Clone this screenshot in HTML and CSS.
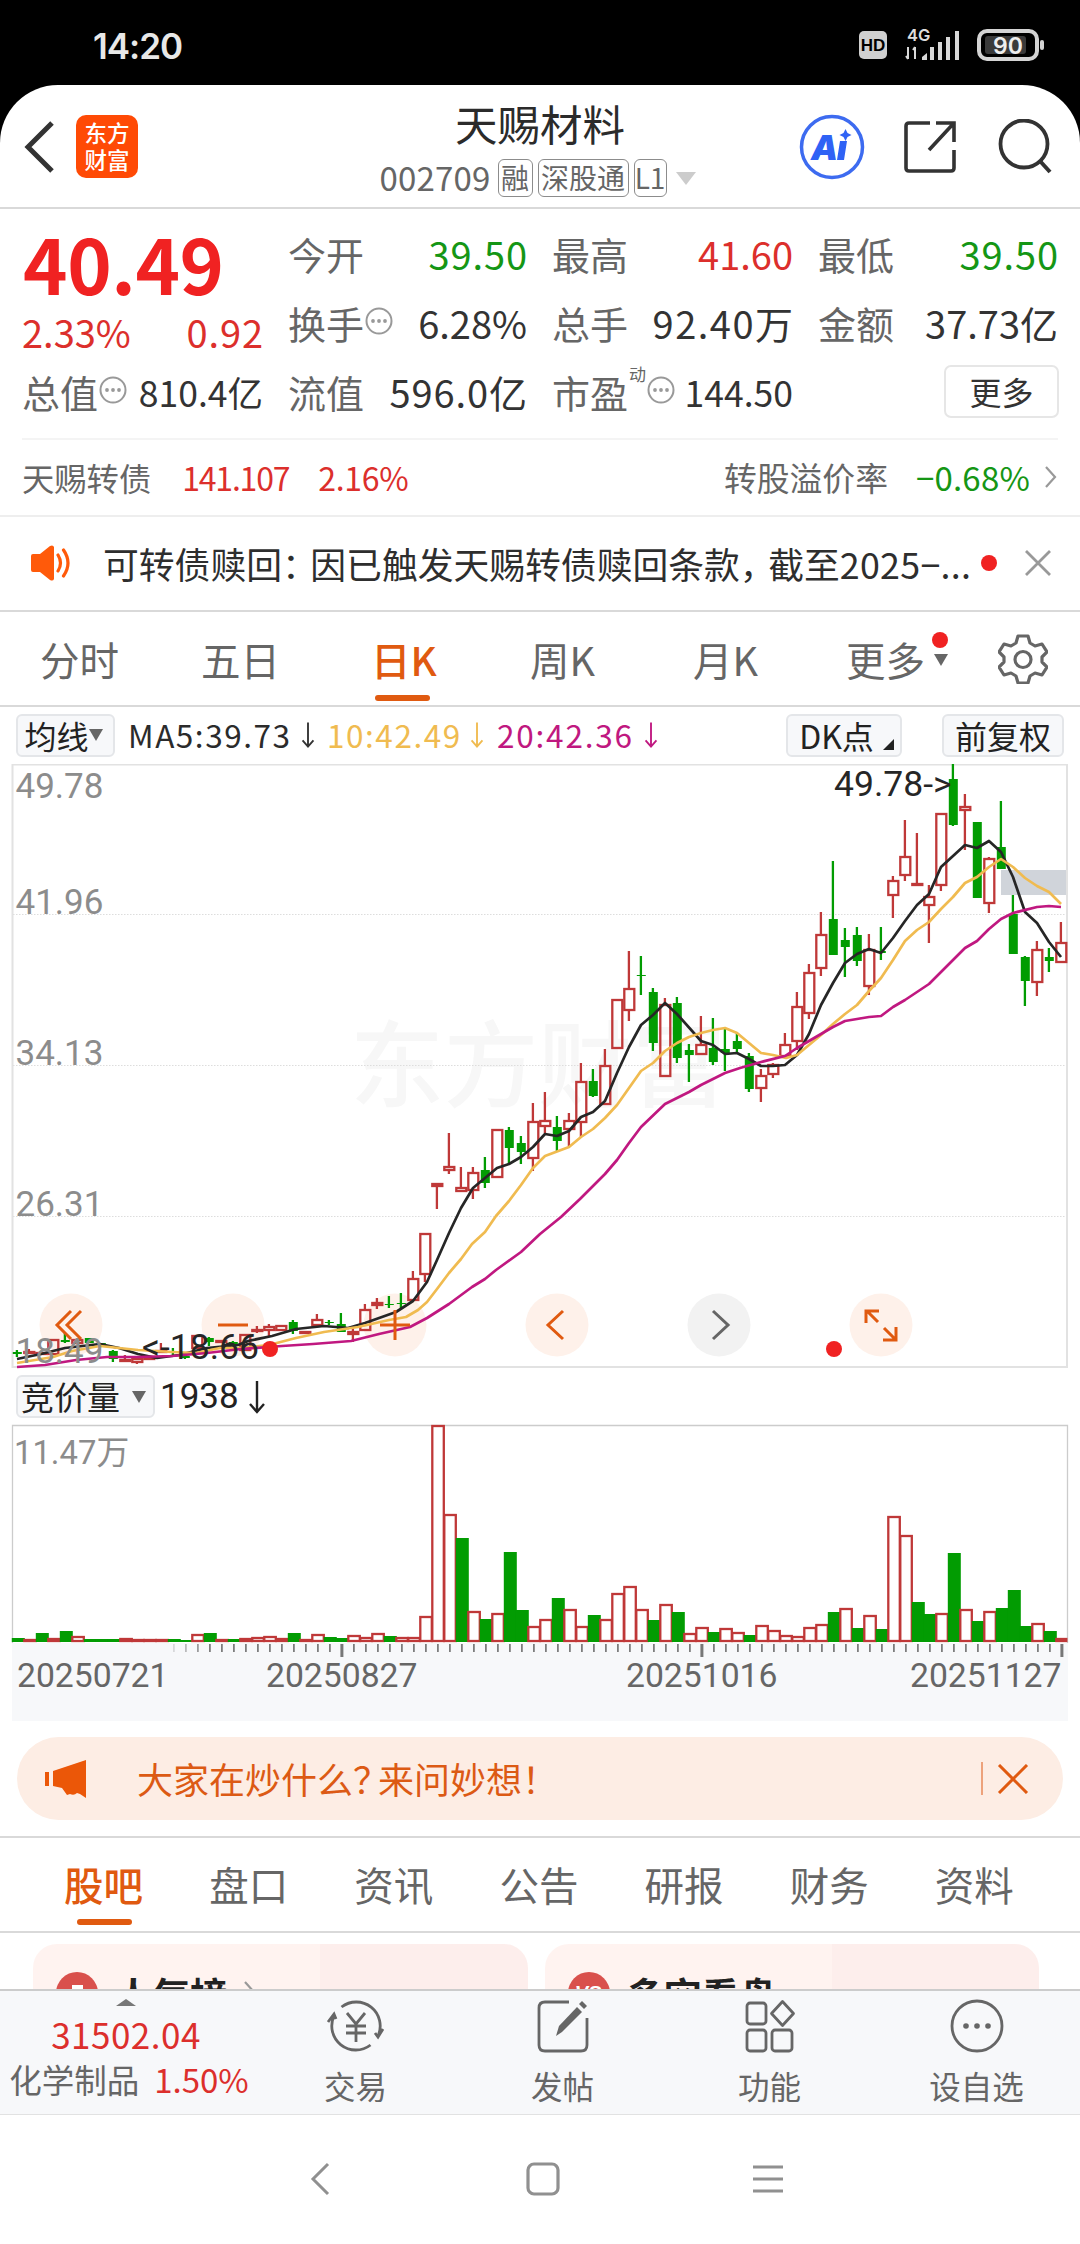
FILE: index.html
```html
<!DOCTYPE html>
<html lang="zh-CN">
<head>
<meta charset="utf-8">
<title>天赐材料 002709</title>
<link rel="stylesheet" href="styles.css">
</head>
<body>
<div class="phone">
  <div class="status">
    <span class="clock">14:20</span>
    <div class="status-icons">
      <span class="hd">HD</span>
      <svg class="signal" width="58" height="36" viewBox="0 0 58 36">
        <text x="2" y="14" class="net">4G</text>
        <path d="M3 20v12M1 29l2 3M10 32V20M8 23l2-3" stroke="#d8d8d8" stroke-width="2" fill="none"/>
        <path d="M17 33v-3l5-4v7zM25 33v-13h4v13zM33 33v-18h4v18zM41 33V10h4v23zM50 33V4h4v29z" fill="#d8d8d8"/>
      </svg>
      <svg width="70" height="32" viewBox="0 0 70 32">
        <rect x="2" y="2" width="58" height="28" rx="8" fill="none" stroke="#d4d4d4" stroke-width="4"/>
        <rect x="8" y="7" width="41" height="18" rx="3" fill="#3a3a3a"/>
        <rect x="63" y="11" width="4" height="10" rx="2" fill="#d4d4d4"/>
        <text x="31" y="24.500" text-anchor="middle" class="batt">90</text>
      </svg>
    </div>
  </div>

  <main class="app">
    <header class="header">
      <div class="head-left">
        <svg width="32" height="54" viewBox="0 0 32 54"><path d="M28 3 4 27l24 24" fill="none" stroke="#333" stroke-width="5"/></svg>
        <div class="logo"><span>东方</span><span>财富</span></div>
      </div>
      <div class="head-title">
        <h1>天赐材料</h1>
        <div class="code"><span class="num">002709</span><i class="t1">融</i><i class="t3">深股通</i><i class="t2">L1</i><b class="tri"></b></div>
      </div>
      <div class="head-right">
        <svg width="66" height="66" viewBox="0 0 66 66"><circle cx="33" cy="33" r="30.500" fill="none" stroke="#3d6bf0" stroke-width="3.500"/><text x="12" y="46" class="ai">A</text><path d="M41 27h7l-3 19h-7zM46.500 15l2 4 4 2-4 2-2 4-2-4-4-2 4-2z" fill="#2f62f5"/></svg>
        <svg width="56" height="56" viewBox="0 0 56 56"><path d="M28 4H7q-3 0-3 3v42q0 3 3 3h42q3 0 3-3V31M34 4h18v19M52 4 27 31" fill="none" stroke="#333" stroke-width="3.600"/></svg>
        <svg width="56" height="56" viewBox="0 0 56 56"><circle cx="26" cy="25" r="23.500" fill="none" stroke="#333" stroke-width="3.800"/><path d="m42 42 10 11" stroke="#333" stroke-width="4"/></svg>
      </div>
    </header>

    <section class="quote">
      <div class="col c1">
        <div class="price">40.49</div>
        <div class="row r2 red"><span>2.33%</span><span class="w1">0.92</span></div>
        <div class="row"><label>总值<svg class="more"><use href="#dots"/></svg></label><span class="sm">810.4亿</span></div>
      </div>
      <div class="col">
        <div class="row"><label>今开</label><span class="green w1">39.50</span></div>
        <div class="row"><label>换手<svg class="more"><use href="#dots"/></svg></label><span>6.28%</span></div>
        <div class="row"><label>流值</label><span class="w1">596.0亿</span></div>
      </div>
      <div class="col">
        <div class="row"><label>最高</label><span class="red">41.60</span></div>
        <div class="row"><label>总手</label><span class="w2">92.40万</span></div>
        <div class="row"><label>市盈<sup>动</sup><svg class="more"><use href="#dots"/></svg></label><span class="sm">144.50</span></div>
      </div>
      <div class="col">
        <div class="row"><label>最低</label><span class="green w1">39.50</span></div>
        <div class="row"><label>金额</label><span>37.73亿</span></div>
        <div class="row end"><button class="btn-more">更多</button></div>
      </div>
    </section>

    <section class="bond">
      <span>天赐转债</span><span class="red b1">141.107</span><span class="red b2">2.16%</span>
      <span class="push">转股溢价率</span><span class="green b3">−0.68%</span>
      <svg width="14" height="24" viewBox="0 0 14 24"><path d="m2 2 9 10-9 10" fill="none" stroke="#999" stroke-width="2.200"/></svg>
    </section>

    <section class="notice">
      <svg width="44" height="36" viewBox="0 0 44 36"><path d="M1 11q0-2 2-2h7L20 1q3-1.500 4 1v32q-1 2.500-4 1l-10-8H3q-2 0-2-2z" fill="#ff5a0a"/><path d="M28 10q5 8 0 16M33.500 5q9 13 0 26" fill="none" stroke="#ff5a0a" stroke-width="3.200" stroke-linecap="round"/></svg>
      <p>可转债赎回<em>：</em>因已触发天赐转债赎回条款<em>，</em>截至<span>2025−...</span></p>
      <b class="dot"></b>
      <svg width="28" height="28" viewBox="0 0 28 28"><path d="m2 2 24 24M26 2 2 26" stroke="#999" stroke-width="2.800"/></svg>
    </section>

    <nav class="periods">
      <span>分时</span><span>五日</span><span class="on">日K</span><span>周K</span><span>月K</span>
      <span class="p-more">更多<b class="dot"></b><b class="tri dark"></b></span>
      <svg width="50" height="50" viewBox="0 0 50 50"><path d="M20 2h10l2 7 5 3 7-2 5 8-5 5v5l5 5-5 8-7-2-5 3-2 7H20l-2-7-5-3-7 2-5-8 5-5v-5l-5-5 5-8 7 2 5-3z" fill="none" stroke="#666" stroke-width="3.200" stroke-linejoin="round"/><circle cx="25" cy="25.500" r="8" fill="none" stroke="#666" stroke-width="3.200"/></svg>
    </nav>

    <section class="ma">
      <button class="chip avg">均线<b class="tri dark"></b></button>
      <span class="m m5">MA5:39.73</span><svg class="arr"><use href="#down"/></svg>
      <span class="m m10">10:42.49</span><svg class="arr m10"><use href="#down"/></svg>
      <span class="m m20">20:42.36</span><svg class="arr m20"><use href="#down"/></svg>
      <button class="chip dk">DK点<b class="corner"></b></button>
      <button class="chip fq">前复权</button>
    </section>

    <section class="kline">
      <svg id="kline" width="1080" height="605" viewBox="0 764 1080 605"></svg>
      <div class="tools">
        <button><svg viewBox="0 0 64 64"><path d="M32 18 18 32l14 14M42 18 28 32l14 14"/></svg></button>
        <button><svg viewBox="0 0 64 64"><path d="M17 32h30"/></svg></button>
        <button><svg viewBox="0 0 64 64"><path d="M17 32h30M32 17v30"/></svg></button>
        <button><svg viewBox="0 0 64 64"><path d="M38 18 23 32l15 14"/></svg></button>
        <button class="off"><svg viewBox="0 0 64 64"><path d="m26 18 15 14-15 14"/></svg></button>
        <button><svg viewBox="0 0 64 64"><path d="M17 30V18h13M18 18l11 11M47 34v13H34M46 46 35 35"/></svg></button>
      </div>
      <b class="dot d1"></b><b class="dot d2"></b>
    </section>

    <section class="auction">
      <button class="chip wide">竞价量<b class="tri dark"></b></button><span>1938</span><svg class="arr"><use href="#down"/></svg>
    </section>
    <svg id="volume" class="volume" width="1080" height="298" viewBox="0 1424 1080 298"></svg>

    <section class="banner">
      <svg width="44" height="38" viewBox="0 0 44 38"><path d="M0 12h4v14H0zM8 11 41 0v38l-6-4-3-1q-3 3-7 1l-3 1-5-7-9-2z" fill="#eb5708"/></svg>
      <p>大家在炒什么<em>？</em>来问妙想！</p>
      <i></i>
      <svg width="32" height="30" viewBox="0 0 32 30"><path d="m2 1 28 28M30 1 2 29" stroke="#e05a10" stroke-width="3"/></svg>
    </section>

    <nav class="tabs"><span class="on">股吧</span><span>盘口</span><span>资讯</span><span>公告</span><span>研报</span><span>财务</span><span>资料</span></nav>

    <section class="cards">
      <div class="card"><svg class="badge" viewBox="0 0 42 42"><circle cx="21" cy="21" r="21"/><path d="M16 13h11v20H16z" fill="#fff"/></svg><strong>人气榜</strong><svg class="chev" width="14" height="24" viewBox="0 0 14 24"><path d="m2 2 9 10-9 10" fill="none" stroke="#999" stroke-width="2.200"/></svg></div>
      <div class="card"><svg class="badge" viewBox="0 0 42 42"><circle cx="21" cy="21" r="21"/><text x="20" y="28" text-anchor="middle">VS</text></svg><strong>多空看盘</strong></div>
    </section>

    <footer class="dock">
      <div class="index"><b class="tri up"></b><span class="val red">31502.04</span><span class="ind">化学制品<em class="red">1.50%</em></span></div>
      <div class="act"><svg viewBox="0 0 60 56"><path d="M15.500 9A24 24 0 0 1 52 38m5-7-5 8-3-4M44.500 47A24 24 0 0 1 8 18m-6 6 6-8 2 5" /><path d="m21 15 9 11 9-11M30 26v18M20 28h20M20 35h20"/></svg>交易</div>
      <div class="act"><svg viewBox="0 0 60 56"><path d="M36 4H12q-6 0-6 6v37q0 6 6 6h36q6 0 6-6V20"/><path d="M23 38 26 28 44 9l5 5-20 20z" fill="#666" stroke="none"/><path d="m46 6 3-3 5 5-3 3z" fill="#666" stroke="none"/></svg>发帖</div>
      <div class="act"><svg viewBox="0 0 60 56"><rect x="7" y="5" width="19" height="21" rx="3"/><rect x="7" y="32" width="19" height="21" rx="3"/><rect x="32" y="32" width="20" height="21" rx="3"/><path d="m42.500 3.500 11 12-11 12-11-12z" stroke-linejoin="round"/></svg>功能</div>
      <div class="act"><svg viewBox="0 0 60 56"><circle cx="30" cy="28" r="25"/><g fill="#666" stroke="none"><circle cx="19" cy="28" r="2.800"/><circle cx="30" cy="28" r="2.800"/><circle cx="41" cy="28" r="2.800"/></g></svg>设自选</div>
    </footer>
  </main>

  <div class="sysnav">
    <svg width="34" height="36" viewBox="0 0 34 36"><path d="M26 3 11 18l15 15" fill="none" stroke="#909090" stroke-width="3"/></svg>
    <svg width="34" height="34" viewBox="0 0 34 34"><rect x="2" y="2" width="30" height="30" rx="6" fill="none" stroke="#909090" stroke-width="3.200"/></svg>
    <svg width="34" height="34" viewBox="0 0 34 34"><path d="M3 5h30M3 17h30M3 29h30" stroke="#909090" stroke-width="3.200"/></svg>
  </div>
</div>

<svg width="0" height="0" class="defs">
  <symbol id="dots" viewBox="0 0 28 28"><circle cx="14" cy="14" r="12.500" fill="none" stroke="#999" stroke-width="2"/><circle cx="8" cy="14" r="1.900" fill="#999"/><circle cx="14" cy="14" r="1.900" fill="#999"/><circle cx="20" cy="14" r="1.900" fill="#999"/></symbol>
  <symbol id="down" viewBox="0 0 18 34"><path d="M9 1v31M2 24l7 8 7-8" fill="none" stroke="currentColor" stroke-width="2.400"/></symbol>
</svg>
<script src="chart.js"></script>
</body>
</html>
```

FILE: styles.css
```css
* { box-sizing: border-box; }
body { margin: 0; background: #000; font-family: "Noto Sans CJK SC", "Noto Sans", sans-serif; color: #333; }
button { font: inherit; color: inherit; padding: 0; margin: 0; }
em, i { font-style: normal; }
.phone { width: 1080px; height: 2244px; overflow: hidden; display: flex; flex-direction: column; background: #000; }
.defs { position: absolute; }
.red { color: #dc2f2c; }
.green { color: #159615; }
.dot { display: block; width: 16px; height: 16px; border-radius: 50%; background: #f02222; }
.tri { display: block; width: 0; height: 0; border: 10px solid transparent; border-top: 13px solid #ccc; border-bottom: 0; }
.tri.dark { border-width: 7px; border-top: 12px solid #666; border-bottom: 0; }
.tri.up { border-top: 0; border-bottom: 7px solid #777; }

.status { height: 85px; flex: none; display: flex; justify-content: space-between; align-items: flex-start; padding: 28px 33px 0 93px; color: #e8e8e8; }
.clock { font: 600 35px/36px Inter, sans-serif; letter-spacing: -1px; }
.status-icons { display: flex; align-items: center; height: 34px; }
.hd { width: 28px; height: 28px; border-radius: 5px; background: #d0d0d0; color: #000; font: 600 17px/29px "Liberation Sans", sans-serif; text-align: center; }
.signal { margin: 0 14px 0 18px; }
.net { font: 600 16.500px Inter, sans-serif; fill: #ddd; }
.batt { font: 600 23px Inter, sans-serif; fill: #eee; }

.app { height: 2030px; flex: none; background: #fff; border-radius: 58px 58px 0 0; overflow: hidden; display: flex; flex-direction: column; }
.app > * { flex: none; }

.header { height: 124px; border-bottom: 2px solid #d9d9d9; display: grid; grid-template-columns: 1fr 400px 1fr; }
.head-left { display: flex; align-items: center; gap: 20px; padding: 1px 0 0 24px; }
.logo { width: 62px; height: 63px; border-radius: 10px; background: #ff4a05; color: #fff; font-size: 22.500px; line-height: 27px; font-weight: 500; display: flex; flex-direction: column; align-items: center; justify-content: center; padding-bottom: 2px; }
.head-title { display: flex; flex-direction: column; align-items: center; }
h1 { margin: 15px 0 0; font-size: 42.500px; line-height: 46px; font-weight: 400; color: #2b2b2b; }
.code { display: flex; align-items: center; height: 40px; margin-top: 12px; font-size: 31px; line-height: 38px; color: #666; margin-left: -5px; }
.code .num { width: 118px; font-size: 33px; letter-spacing: .2px; position: relative; top: -1px; }
.code i { border: 1.500px solid #8c8c8c; border-radius: 6px; height: 38px; font-size: 28px; line-height: 34px; text-align: center; margin-right: 5px; }
.t1 { width: 35px; } .t3 { width: 91px; } .t2 { width: 33px; }
.code .t2 { margin-right: 9px; }
.head-right { display: flex; align-items: center; justify-content: flex-end; padding: 1px 26px 0 0; gap: 40px; }
.head-right svg:first-child { margin-right: -3px; }
.ai { font: 900 italic 34px Inter, sans-serif; fill: #2f62f5; }

.quote { height: 229px; display: grid; grid-template-columns: 241px 239px 241px 240px; column-gap: 25px; justify-content: start; padding: 10px 0 0 22px; font-size: 38px; }
.col { display: flex; flex-direction: column; }
.row { height: 69px; display: flex; align-items: center; justify-content: space-between; white-space: nowrap; padding-bottom: 1px; }
.row label { color: #666; display: flex; align-items: center; }
.row .sm { font-size: 35.500px; }
.row .w1 { letter-spacing: .9px; margin-right: -.9px; }
.row .w2 { letter-spacing: 1.500px; margin-right: -1.500px; }
.row.end { justify-content: flex-end; }
.more { width: 28px; height: 28px; margin: -3px 0 0 1px; }
sup { font-size: 17px; line-height: 20px; align-self: flex-start; margin-left: 1px; }
.price { height: 90px; font-size: 75.500px; font-weight: 700; line-height: 86px; color: #f02222; letter-spacing: -.4px; padding-left: 1px; }
.row.r2 { height: 48px; padding-bottom: 3px; }
.btn-more { width: 115px; height: 53px; border: 2px solid #e6e6e6; border-radius: 7px; background: #fff; font-size: 32px; line-height: 44px; margin-right: -1px; }

.bond { height: 77px; margin: 0 22px; padding-bottom: 2px; border-top: 2px solid #f4f4f4; display: flex; align-items: center; font-size: 32.300px; color: #666; white-space: nowrap; }
.bond .b1 { margin-left: 31px; width: 136px; letter-spacing: -1.200px; font-size: 32px; }
.bond .b2 { font-size: 32px; letter-spacing: -.3px; }
.bond .push { margin-left: auto; font-size: 32.800px; }
.bond .b3 { margin: 0 14px 0 28px; font-size: 33px; letter-spacing: .2px; }
.bond .red { color: #dc2f2c; } .bond .green { color: #159615; }

.notice { height: 97px; border-top: 2px solid #eee; border-bottom: 2px solid #d9d9d9; display: flex; align-items: center; padding: 0 28px 2px 30px; }
.notice p { margin: 0 0 0 29px; width: 878px; font-size: 35.800px; white-space: nowrap; color: #2e2e2e; }
.notice p span { letter-spacing: .3px; }
.notice em { margin-right: -7.500px; }
.notice .dot { margin-right: 27px; }

.periods { height: 95px; border-bottom: 2px solid #d9d9d9; display: flex; align-items: center; font-size: 39.500px; color: #666; padding-left: 40px; line-height: 93px; }
.periods span { position: relative; width: 165px; }
.periods span:nth-child(2) { margin-left: -4px; width: 170px; }
.periods span:nth-child(3) { width: 159px; } .periods span:nth-child(4) { width: 163px; } .periods span:nth-child(5) { width: 153px; }
.periods .p-more { width: 152px; }
.on { color: #e05a10; font-weight: 500; position: relative; }
.on::after { content: ""; position: absolute; left: 4px; bottom: 4px; width: 55px; height: 6px; border-radius: 3px; background: #e05a10; }
.p-more .dot { position: absolute; left: 86px; top: 20px; }
.p-more .tri { position: absolute; left: 88px; top: 42px; }

.ma { height: 57px; display: flex; align-items: center; padding: 0 0 1px 16px; font-size: 31.500px; white-space: nowrap; }
.chip { height: 43px; border: 2px solid #e4e6e9; border-radius: 6px; background: #f7f8fa; display: flex; align-items: center; justify-content: center; font-size: 32px; line-height: 35px; width: 99px; color: #222; }
.m { color: #2b2b2b; margin-left: 13px; letter-spacing: 1.550px; position: relative; top: -1px; }
.m5 { width: 168px; } .m.m10 { width: 138px; margin-left: 12px; } .m.m20 { width: 142px; margin-left: 13px; letter-spacing: 1.800px; }
.m10 { color: #f0bb50; } .m20 { color: #c01880; }
.arr { width: 14px; height: 32px; margin-left: 5px; flex: none; }
.m10, .m20 { flex: none; }
.ma .chip { font-size: 32px; }
.chip.avg { padding-right: 4px; }
.dk { width: 116px; margin-left: auto; position: relative; padding-right: 15px; }
.corner { position: absolute; right: 6px; bottom: 5px; border-left: 11px solid transparent; border-bottom: 11px solid #222; }
.fq { width: 122px; margin: 0 16px 0 40px; }

.kline { position: relative; height: 605px; }
.kline > svg { display: block; }
.tools { position: absolute; left: 39px; top: 529px; display: flex; gap: 98px; }
.tools button { width: 64px; height: 64px; border: 0; background: none; }
.tools svg { display: block; width: 64px; height: 64px; fill: none; stroke: #e05a10; stroke-width: 3; }
.tools .off svg { stroke: #666; }
.kline .dot { position: absolute; top: 577px; }
.d1 { left: 262px; } .d2 { left: 826px; }

.auction { height: 55px; display: flex; align-items: center; padding: 0 0 0 16px; font-size: 34px; color: #222; }
.auction span { font: 35px Roboto, sans-serif; margin-left: 5px; width: 82px; }
.auction .arr { margin-left: 6px; height: 34px; width: 18px; }
.chip.wide { width: 139px; gap: 12px; padding-right: 4px; font-size: 33px; }
.volume { display: block; }

.axis { font-family: Roboto, "Noto Sans CJK SC", sans-serif; }

.banner { height: 83px; margin: 15px 17px 16px; border-radius: 42px; background: #fdede4; display: flex; align-items: center; padding: 0 34px 0 28px; color: #dc5a14; }
.banner p { margin: -2px auto 0 48px; font-size: 36px; }
.banner em { margin-right: -11px; }
.banner i { width: 2px; height: 33px; background: #eda27b; margin-right: 14px; }

.tabs { height: 97px; border-top: 2px solid #d9d9d9; border-bottom: 2px solid #d9d9d9; display: flex; font-size: 39.500px; line-height: 92px; color: #666; padding-left: 64px; }
.tabs span { width: 145.400px; position: relative; }
.tabs .on { color: #e05a10; }
.tabs .on::after { left: 13px; bottom: 6px; }

.cards { height: 56px; overflow: hidden; display: flex; gap: 17px; padding: 11px 41px 0 33px; }
.card { flex: 1; height: 120px; border-radius: 24px; background: linear-gradient(90deg, #fff3f0 0 58%, #fdeeec 58%); display: flex; align-items: flex-start; padding: 28px 0 0 23px; }
.badge { width: 42px; height: 42px; fill: #d9504c; }
.badge text { font: italic 700 20px "Liberation Sans", sans-serif; fill: #fff; }
.card strong { font-size: 37.500px; line-height: 42px; margin: 1px 15px 0 17px; color: #222; }
.chev { margin-top: 8px; }

.dock { height: 127px; border-top: 2px solid #ccc; border-bottom: 2px solid #e2e2e2; background: #f7f8fa; display: grid; grid-template-columns: 252px 207px 207px 207px 207px; font-size: 32px; color: #666; }
.index { display: flex; flex-direction: column; align-items: center; padding-top: 8px; }
.index .tri { border-left-width: 10px; border-right-width: 10px; }
.val { line-height: 44px; margin-top: 6px; font-size: 35px; letter-spacing: .5px; }
.ind { line-height: 44px; margin-top: 1px; font-size: 32.500px; white-space: nowrap; padding-left: 6px; }
.ind em { margin-left: 15px; font-size: 33px; }
.act { display: flex; flex-direction: column; align-items: center; line-height: 44px; padding-top: 7px; font-size: 31.500px; }
.act svg { width: 60px; height: 56px; margin-bottom: 9px; fill: none; stroke: #666; stroke-width: 2.800; }

.sysnav { flex: 1; background: #fff; display: flex; justify-content: center; align-items: center; gap: 190px; padding: 0 0 2px 6px; }
```

FILE: chart.js
```js
// Colour, high, body top, body bottom, low, auction volume height
const days = [
"G 1350 1352 1354 1357 4","R 1349 1351 1353 1354 3","R 1351 1352 1354 1355 9G","R 1339 1339 1355 1355 4","G 1333 1340 1342 1343 11","R 1339 1339 1344 1344 6","G 1338 1338 1343 1343 3","G 1343 1343 1347 1347 3",
"G 1350 1351 1359 1362 3","R 1355 1359 1361 1362 4","R 1357 1358 1363 1364 3","R 1357 1357 1359 1359 3","R 1343 1350 1353 1353 3","G 1348 1352 1353 1355 3","G 1355 1356 1358 1359 2","R 1335 1335 1349 1349 8",
"G 1337 1338 1342 1346 9","R 1340 1340 1343 1343 3","G 1341 1342 1345 1347 3","R 1334 1334 1351 1351 4","R 1326 1329 1331 1333 5","R 1324 1326 1331 1336 6","R 1325 1325 1331 1331 4","G 1320 1322 1331 1334 9",
"R 1331 1331 1334 1334 3","R 1314 1319 1326 1326 8","G 1320 1322 1323 1325 5","G 1313 1324 1332 1332 4","R 1328 1331 1335 1342 7","R 1304 1309 1331 1331 5","R 1298 1302 1306 1309 9","G 1296 1304 1305 1308 6G",
"G 1293 1303 1304 1308 5R","R 1271 1278 1301 1301 5","R 1233 1233 1275 1282 26","R 1183 1183 1187 1209 217","R 1133 1166 1171 1174 128","R 1167 1187 1192 1192 104G","R 1167 1172 1191 1199 31","G 1157 1170 1183 1188 23",
"R 1129 1129 1178 1178 29","G 1127 1130 1148 1164 90","G 1136 1143 1152 1164 32","R 1103 1121 1159 1171 16","R 1092 1120 1127 1133 23","G 1116 1127 1141 1151 44","R 1113 1120 1130 1146 33R","R 1063 1081 1123 1137 16",
"G 1069 1081 1096 1097 27","R 1049 1065 1105 1105 23","R 999 999 1049 1049 49","R 951 988 1011 1021 56","G 956 975 976 995 33R","G 988 992 1043 1051 22","R 998 1004 1077 1077 38","G 997 1003 1058 1063 30",
"G 1044 1050 1055 1082 9R","R 1016 1044 1055 1055 15","G 1018 1048 1062 1065 10","G 1029 1049 1053 1071 14R","G 1033 1041 1049 1052 10R","G 1053 1056 1089 1092 7","R 1069 1075 1089 1102 17","R 1063 1064 1075 1078 12",
"R 1033 1044 1057 1057 7","R 992 1006 1042 1050 6","R 964 972 1014 1019 15","R 912 934 969 976 18","G 861 919 955 955 30","G 928 940 947 977 34R","G 927 935 961 966 14","R 934 949 987 995 27",
"G 927 951 953 960 13","R 876 880 896 918 126","R 820 856 876 881 107","R 833 883 886 886 40G","R 885 896 906 943 28G","R 813 813 886 891 29","G 764 779 825 826 89","R 794 806 811 850 33",
"G 822 822 898 898 21","R 857 858 904 913 31","G 801 847 869 869 34","G 895 914 954 954 52","G 956 957 981 1006 16","R 941 949 983 996 19","G 948 957 961 972 11","R 922 942 963 963 4"];

// Moving averages as x,y points on the chart canvas
const ma5 = "17,1359 41,1354 65,1348 100,1344 119,1348 138,1354 157,1358 179,1355 207,1348 238,1345 248,1341 272,1336 296,1329 324,1326 348,1328 365,1323 396,1312 413,1301 427,1282 437,1260 449,1233 461,1208 473,1188 485,1178 497,1168 509,1164 521,1157 533,1147 545,1134 557,1136 569,1131 581,1117 593,1112 605,1101 617,1073 629,1047 641,1025 653,1015 665,1003 677,1014 701,1041 713,1045 725,1054 737,1053 749,1059 761,1066 773,1066 785,1065 797,1055 809,1034 821,1005 833,983 845,963 857,954 869,949 881,953 893,938 905,921 917,905 929,894 941,867 953,856 965,845 977,848 989,841 1001,852 1013,877 1025,912 1037,923 1049,942 1061,957";
const ma10 = "17,1363 53,1357 72,1351 100,1346 119,1348 138,1350 172,1352 196,1353 220,1348 241,1348 269,1345 296,1338 324,1332 358,1327 389,1320 406,1317 418,1310 427,1302 437,1289 449,1273 461,1259 472,1244 485,1232 496,1216 509,1201 521,1185 533,1168 545,1156 569,1147 581,1137 593,1129 605,1118 617,1105 629,1088 641,1071 653,1063 665,1051 677,1043 689,1037 701,1033 713,1030 725,1028 737,1033 749,1043 761,1053 773,1055 786,1058 797,1055 809,1045 821,1035 833,1024 845,1014 857,1005 869,991 881,978 893,960 905,941 917,930 929,922 941,909 953,897 965,883 977,877 989,867 1001,859 1013,867 1025,878 1037,886 1049,892 1061,904";
const ma20 = "17,1367 45,1365 76,1360 107,1357 138,1357 172,1356 207,1353 241,1349 282,1346 313,1344 351,1341 379,1334 410,1327 427,1318 449,1304 472,1287 485,1279 496,1270 521,1252 540,1234 561,1217 580,1199 605,1174 617,1160 629,1143 641,1127 665,1104 689,1092 701,1085 725,1073 740,1068 761,1062 785,1056 797,1048 809,1041 821,1034 833,1027 845,1021 857,1019 869,1017 881,1016 893,1007 905,1000 929,984 941,972 965,948 977,941 989,929 1001,919 1013,913 1037,907 1049,906 1061,907";

const RED = "#bf3838", GREEN = "#029c02";
const cx = i => 17.3 + i * 12;
const text = (x, y, size, fill, s, extra = "") => `<text class="axis" x="${x}" y="${y}" font-size="${size}" fill="${fill}" ${extra}>${s}</text>`;

let k = `<text x="350" y="1100" font-size="94" font-weight="500" fill="#f7f7f7" font-family="Noto Sans CJK SC">东方财富</text>`;
for (const y of [914.5, 1065.5, 1216.5]) k += `<path d="M13 ${y}H1067" stroke="#ddd" stroke-dasharray="1.500 1.500"/>`;
// Round backs of the toolbar buttons sit under the candles
[71, 233, 395, 557, 719, 881].forEach((x, i) => { k += `<circle cx="${x}" cy="1325" r="31.500" fill="${i === 4 ? "#f2f2f2" : "#fef1ea"}"/>`; });
k += `<rect x="1001" y="870" width="66" height="25" fill="#d0d4da"/>`;
k += `<rect x="12.500" y="764.500" width="1054.500" height="602.500" fill="none" stroke="#e2e2e2" stroke-width="2"/>`;
let v = `<rect x="12" y="1643" width="1056" height="78" fill="#f7f8fa"/><path d="M12.500 1643V1425.500H1067.500V1643" fill="none" stroke="#ccc" stroke-width="1.300"/>`;

days.forEach((row, i) => {
  const p = row.split(" ");
  const [hi, top, bot, lo, vol] = p.slice(1).map(n => parseInt(n, 10));
  const up = p[0] === "R", x = cx(i), c = up ? RED : GREEN;
  k += `<path d="M${x - .4} ${hi}V${top}M${x - .4} ${bot}V${lo}" stroke="${c}" stroke-width="2.300"/>`;
  k += up
    ? `<rect x="${x - 5}" y="${top + 1}" width="10" height="${Math.max(bot - top - 2, 1)}" fill="none" stroke="${c}" stroke-width="2.300"/>`
    : `<rect x="${x - 4.5}" y="${top}" width="9" height="${bot - top}" fill="${c}"/>`;
  const flag = /[RG]$/.exec(p[5]);
  const vUp = flag ? flag[0] === "R" : up, y = 1642 - vol;
  v += vUp
    ? `<rect x="${x - 5}" y="${y + 1}" width="${i === 87 ? 10 : 11.5}" height="${Math.max(vol - 2, 1)}" fill="${vol < 5 ? RED : "#fff"}" stroke="${RED}" stroke-width="2.300"/>`
    : `<rect x="${x - 5.5}" y="${y}" width="13" height="${vol}" fill="${GREEN}"/>`;
  if (i > 12) {
    const major = i === 27 || i === 57 || i === 87;
    v += `<path d="M${x + .6} 1644v${major ? 13 : 8}" stroke="#777" stroke-width="${major ? 3 : 1.7}" opacity="${Math.min(1, (i - 12) / 4)}"/>`;
  }
});

for (const [pts, c] of [[ma5, "#262626"], [ma10, "#f0bb50"], [ma20, "#c01880"]])
  k += `<polyline points="${pts}" fill="none" stroke="${c}" stroke-width="2.700" stroke-linejoin="round"/>`;
for (const [y, s] of [[798, "49.78"], [914, "41.96"], [1065, "34.13"], [1216, "26.31"], [1363, "18.49"]])
  k += text(15.5, y, 35, "#8c8c8c", s);
k += text(834, 796, 35.5, "#262626", "49.78-&gt;") + text(142, 1359, 35.5, "#262626", "&lt;-18.66");
v += text(14, 1464, 32.8, "#8c8c8c", "11.47万");
for (const [x, s] of [[17, "20250721"], [266, "20250827"], [626, "20251016"], [910, "20251127"]])
  v += text(x, 1687, 33.7, "#666", s);

document.getElementById("kline").innerHTML = k;
document.getElementById("volume").innerHTML = v;
```
